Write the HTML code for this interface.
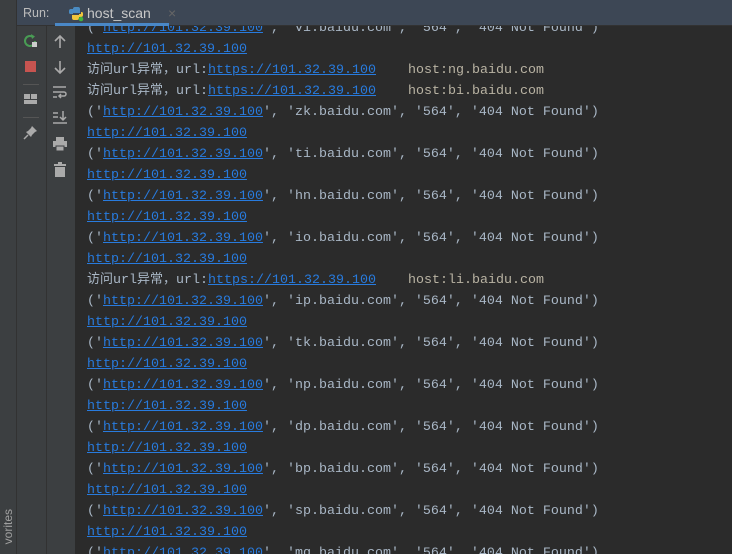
<!DOCTYPE html>
<html><head><meta charset="utf-8"><style>
*{margin:0;padding:0;box-sizing:border-box}
html,body{width:732px;height:554px;overflow:hidden}
body{background:#2b2b2b;position:relative;font-family:"Liberation Mono","Noto Sans CJK SC",monospace}
#strip{position:absolute;left:0;top:0;width:17px;height:554px;background:#3c3f41;border-right:1px solid #323232}
#strip span{position:absolute;left:-12px;bottom:18px;transform:rotate(-90deg);transform-origin:center;color:#a0a0a0;font:12px "Liberation Sans",sans-serif;width:40px;text-align:right}
#hdr{position:absolute;left:17px;top:0;width:715px;height:26px;background:#3d4755;z-index:3;border-bottom:1px solid #323232}
#hdr .run{position:absolute;left:6px;top:6px;color:#bbb;font:12.5px "Liberation Sans",sans-serif}
#hdr .tab{position:absolute;left:70px;top:5px;color:#c8c8c8;font:14px "Liberation Sans",sans-serif}
#hdr .x{position:absolute;left:151px;top:5px;color:#666;font:14px "Liberation Sans",sans-serif}
#hdr .ul{position:absolute;left:38px;top:23px;width:114px;height:3px;background:#4a88c7}
#c1{position:absolute;left:17px;top:26px;width:30px;height:528px;background:#3c3f41;border-right:1px solid #323232;z-index:2}
#c2{position:absolute;left:47px;top:26px;width:28px;height:528px;background:#3c3f41;z-index:2}
#con{position:absolute;left:87px;top:18px;width:645px;height:536px;overflow:hidden;color:#a9b7c6;font-size:13.33px;z-index:1}
#con div{height:21px;line-height:21px;white-space:pre;overflow:hidden}
a{color:#287bde;text-decoration:underline}
.h{color:#b9b3a3}
.cn{font-family:"Noto Sans CJK SC",sans-serif;font-size:13px;line-height:13px}
</style></head><body>
<div id="strip"><span>vorites</span></div>
<div id="hdr"><span class="run">Run:</span>
<svg style="position:absolute;left:51px;top:6px" width="16" height="16" viewBox="0 0 16 16"><path d="M7 1h3a2 2 0 0 1 2 2v4H5v1H2.5A1.5 1.5 0 0 1 1 6.5V5a2 2 0 0 1 2-2h2V3a2 2 0 0 1 2-2z" fill="#4a8bc2"/><path d="M13 6h.5A1.5 1.5 0 0 1 15 7.5V9a2 2 0 0 1-2 2h-2v1a2 2 0 0 1-2 2H6a2 2 0 0 1-2-2V9h7V8h2z" fill="#f0c63c"/><circle cx="13" cy="13" r="2.3" fill="#3fb33f"/></svg>
<span class="tab">host_scan</span><span class="x">×</span><div class="ul"></div></div>
<div id="c1">
<svg style="position:absolute;left:6px;top:7px" width="16" height="16" viewBox="0 0 16 16"><path d="M12 8a5 5 0 1 1-2-4" fill="none" stroke="#499c54" stroke-width="2"/><path d="M8 1l4 2.5-3 2.5z" fill="#499c54"/><rect x="9" y="9" width="5" height="5" fill="#ccc"/></svg>
<div style="position:absolute;left:8px;top:35px;width:11px;height:11px;background:#c75450"></div>
<div style="position:absolute;left:6px;top:58px;width:16px;height:1px;background:#555"></div>
<svg style="position:absolute;left:6px;top:67px" width="16" height="12"><rect x="1" y="1" width="6" height="5" fill="#aaa"/><rect x="8" y="1" width="6" height="5" fill="#aaa"/><rect x="1" y="7" width="13" height="4" fill="#aaa"/></svg>
<div style="position:absolute;left:6px;top:91px;width:16px;height:1px;background:#555"></div>
<svg style="position:absolute;left:6px;top:98px" width="16" height="16" viewBox="0 0 16 16"><path d="M9 2l5 5-2 1-3 3-1 2-5-5 2-1 3-3z" fill="#aaa"/><path d="M5 11l-4 4" stroke="#aaa" stroke-width="1.5"/></svg>
</div>
<div id="c2">
<svg style="position:absolute;left:6px;top:8px" width="14" height="16" viewBox="0 0 14 16" fill="none" stroke="#aaa" stroke-width="1.6"><path d="M7 14V2M2 7l5-5 5 5"/></svg>
<svg style="position:absolute;left:6px;top:33px" width="14" height="16" viewBox="0 0 14 16" fill="none" stroke="#aaa" stroke-width="1.6"><path d="M7 2v12M2 9l5 5 5-5"/></svg>
<svg style="position:absolute;left:5px;top:58px" width="16" height="16" viewBox="0 0 16 16" fill="none" stroke="#aaa" stroke-width="1.5"><path d="M1 3h13M1 8h11a2 2 0 0 1 0 4H8M1 13h4M9 10l-2 2 2 2"/></svg>
<svg style="position:absolute;left:5px;top:83px" width="16" height="16" viewBox="0 0 16 16" fill="none" stroke="#aaa" stroke-width="1.5"><path d="M1 4h5M1 8h5M1 14h14M11 2v9M8 8l3 3 3-3"/></svg>
<svg style="position:absolute;left:5px;top:110px" width="16" height="16" viewBox="0 0 16 16"><rect x="4" y="1" width="8" height="4" fill="#aaa"/><rect x="1" y="5" width="14" height="6" fill="#aaa"/><rect x="4" y="10" width="8" height="5" fill="#aaa" stroke="#3c3f41"/></svg>
<svg style="position:absolute;left:6px;top:136px" width="14" height="16" viewBox="0 0 14 16"><rect x="1" y="2" width="12" height="2" fill="#aaa"/><rect x="5" y="0" width="4" height="2" fill="#aaa"/><rect x="2" y="5" width="10" height="10" fill="#aaa"/></svg>
</div>
<div id="con">
<div>('<a>http://101.32.39.100</a>', 'vi.baidu.com', '564', '404 Not Found')</div>
<div><a>http://101.32.39.100</a></div>
<div><span class="cn">访问</span>url<span class="cn">异常，</span>url:<a>https://101.32.39.100</a>    <span class="h">host:ng.baidu.com</span></div>
<div><span class="cn">访问</span>url<span class="cn">异常，</span>url:<a>https://101.32.39.100</a>    <span class="h">host:bi.baidu.com</span></div>
<div>('<a>http://101.32.39.100</a>', 'zk.baidu.com', '564', '404 Not Found')</div>
<div><a>http://101.32.39.100</a></div>
<div>('<a>http://101.32.39.100</a>', 'ti.baidu.com', '564', '404 Not Found')</div>
<div><a>http://101.32.39.100</a></div>
<div>('<a>http://101.32.39.100</a>', 'hn.baidu.com', '564', '404 Not Found')</div>
<div><a>http://101.32.39.100</a></div>
<div>('<a>http://101.32.39.100</a>', 'io.baidu.com', '564', '404 Not Found')</div>
<div><a>http://101.32.39.100</a></div>
<div><span class="cn">访问</span>url<span class="cn">异常，</span>url:<a>https://101.32.39.100</a>    <span class="h">host:li.baidu.com</span></div>
<div>('<a>http://101.32.39.100</a>', 'ip.baidu.com', '564', '404 Not Found')</div>
<div><a>http://101.32.39.100</a></div>
<div>('<a>http://101.32.39.100</a>', 'tk.baidu.com', '564', '404 Not Found')</div>
<div><a>http://101.32.39.100</a></div>
<div>('<a>http://101.32.39.100</a>', 'np.baidu.com', '564', '404 Not Found')</div>
<div><a>http://101.32.39.100</a></div>
<div>('<a>http://101.32.39.100</a>', 'dp.baidu.com', '564', '404 Not Found')</div>
<div><a>http://101.32.39.100</a></div>
<div>('<a>http://101.32.39.100</a>', 'bp.baidu.com', '564', '404 Not Found')</div>
<div><a>http://101.32.39.100</a></div>
<div>('<a>http://101.32.39.100</a>', 'sp.baidu.com', '564', '404 Not Found')</div>
<div><a>http://101.32.39.100</a></div>
<div>('<a>http://101.32.39.100</a>', 'mq.baidu.com', '564', '404 Not Found')</div>
</div>
</body></html>
